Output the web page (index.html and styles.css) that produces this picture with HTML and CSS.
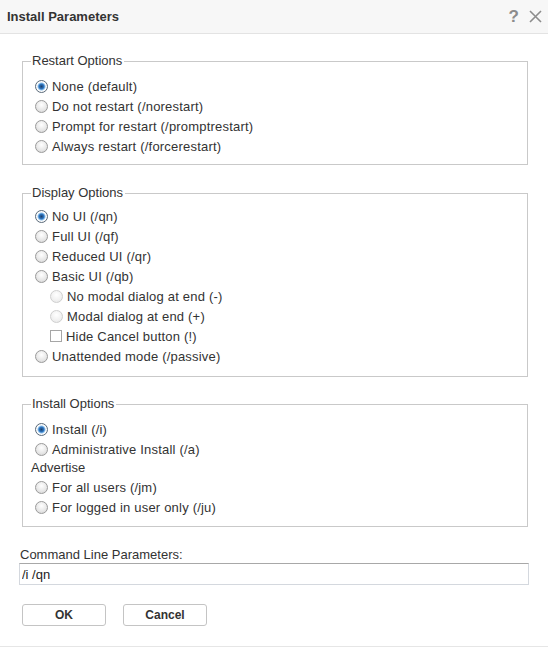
FILE: index.html
```html
<!DOCTYPE html>
<html lang="en">
<head>
    <meta charset="UTF-8">
    <title>Install Parameters</title>
    <link rel="stylesheet" href="styles.css">
</head>
<body>
<div class="dialog">
    <div class="titlebar">
        <span class="title">Install Parameters</span>
        <span class="tools">
            <span class="help">?</span>
            <svg class="close" width="13" height="13" viewBox="0 0 13 13">
                <path d="M1 1 L12 12 M12 1 L1 12" stroke="#8c8c8c" stroke-width="1.6" fill="none"/>
            </svg>
        </span>
    </div>

    <div class="content">
        <fieldset class="group first">
            <legend>Restart Options</legend>
            <label class="opt"><input type="radio" name="restart" checked> None (default)</label>
            <label class="opt"><input type="radio" name="restart"> Do not restart (/norestart)</label>
            <label class="opt"><input type="radio" name="restart"> Prompt for restart (/promptrestart)</label>
            <label class="opt"><input type="radio" name="restart"> Always restart (/forcerestart)</label>
        </fieldset>

        <fieldset class="group middle">
            <legend>Display Options</legend>
            <label class="opt"><input type="radio" name="display" checked> No UI (/qn)</label>
            <label class="opt"><input type="radio" name="display"> Full UI (/qf)</label>
            <label class="opt"><input type="radio" name="display"> Reduced UI (/qr)</label>
            <label class="opt"><input type="radio" name="display"> Basic UI (/qb)</label>
            <label class="opt sub"><input type="radio" name="basic" disabled> No modal dialog at end (-)</label>
            <label class="opt sub"><input type="radio" name="basic" disabled> Modal dialog at end (+)</label>
            <label class="opt sub"><input type="checkbox"> Hide Cancel button (!)</label>
            <label class="opt"><input type="radio" name="display"> Unattended mode (/passive)</label>
        </fieldset>

        <fieldset class="group last">
            <legend>Install Options</legend>
            <label class="opt"><input type="radio" name="install" checked> Install (/i)</label>
            <label class="opt"><input type="radio" name="install"> Administrative Install (/a)</label>
            <div class="caption">Advertise</div>
            <label class="opt"><input type="radio" name="advertise"> For all users (/jm)</label>
            <label class="opt"><input type="radio" name="advertise"> For logged in user only (/ju)</label>
        </fieldset>

        <div class="cmd">
            <label for="cmdline">Command Line Parameters:</label>
            <input type="text" id="cmdline" value="/i /qn">
        </div>

        <div class="buttons">
            <button>OK</button>
            <button>Cancel</button>
        </div>
    </div>
</div>
</body>
</html>
```

FILE: styles.css
```css
body {
    margin: 0;
    font-family: "Liberation Sans", Arial, sans-serif;
    font-size: 13px;
    color: #333;
    background: #fff;
}

.dialog {
    width: 548px;
    height: 646px;
    border-bottom: 1px solid #e6e6e6;
}

.titlebar {
    height: 33px;
    background: #f7f7f7;
    border-bottom: 1px solid #e3e3e3;
    display: flex;
    align-items: center;
    justify-content: space-between;
    padding: 0 6px 0 7px;
}

.title {
    font-weight: bold;
    color: #333;
}

.tools {
    display: flex;
    align-items: center;
    gap: 10px;
}

.help {
    font-size: 17px;
    color: #8c8c8c;
    font-weight: bold;
}

.content {
    padding: 0 20px 0 22px;
}

.group {
    margin: 20px 0 0;
    padding: 7px 12px 8px 12px;
    border: 1px solid #c9c9c9;
    min-width: 0;
}

.group.first {
    margin-top: 19px;
}

.group.middle {
    padding-top: 5px;
    padding-bottom: 10px;
}

.group.last {
    margin-top: 19px;
    padding-bottom: 9px;
}

.group legend {
    padding: 0 2px 0 1px;
    margin-left: -4px;
    line-height: 16px;
    color: #333;
}

.opt {
    display: flex;
    align-items: center;
    height: 20px;
    white-space: nowrap;
    letter-spacing: 0.2px;
}

.opt.sub {
    padding-left: 15px;
}

.caption {
    height: 18px;
    line-height: 18px;
    margin-left: -4px;
}

.opt input {
    appearance: none;
    -webkit-appearance: none;
    margin: 0 4px 0 0;
    width: 13px;
    height: 13px;
    flex: none;
}

.opt input[type="radio"] {
    border-radius: 50%;
    border: 1px solid #9a9a9a;
    background: radial-gradient(circle at 50% 35%, #ffffff 0%, #e6e6e6 60%, #cfcfcf 100%);
}

.opt input[type="radio"]:checked {
    border-color: #5a6a7a;
    background: radial-gradient(circle, #1b3f6b 0, #2f78c4 2.5px, #8fc0ea 3.5px, #ffffff 4.5px, #e6e6e6 100%);
}

.opt input[type="radio"]:disabled {
    border-color: #cfcfcf;
    background: radial-gradient(circle at 50% 35%, #ffffff 0%, #eeeeee 70%, #e2e2e2 100%);
}

.opt input[type="checkbox"] {
    width: 12px;
    height: 12px;
    margin-right: 4px;
    border: 1px solid #a6a6a6;
    background: #fff;
}

.cmd {
    margin-top: 20px;
    margin-left: -3px;
}

.cmd label {
    display: block;
    line-height: 16px;
    margin-left: 1px;
}

.cmd input {
    box-sizing: border-box;
    display: block;
    width: 510px;
    height: 22px;
    margin-top: 0;
    padding: 0 4px 0 2px;
    border: 1px solid #d4d8de;
    border-top-color: #a8a8a8;
    font-family: "Liberation Sans", Arial, sans-serif;
    font-size: 13px;
    color: #222;
}

.buttons {
    display: flex;
    gap: 17px;
    margin-top: 19px;
}

.buttons button {
    width: 84px;
    height: 22px;
    background: #fff;
    border: 1px solid #c4c4c4;
    border-radius: 3px;
    font-family: "Liberation Sans", Arial, sans-serif;
    font-size: 12px;
    font-weight: bold;
    color: #333;
    cursor: pointer;
}
```
